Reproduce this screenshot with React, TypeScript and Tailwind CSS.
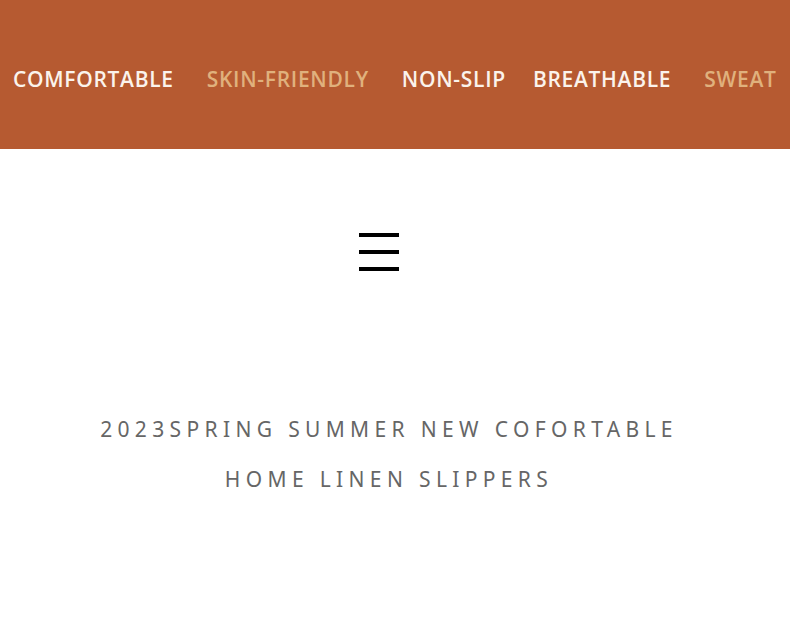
import React from 'react'

const tags = [
  { label: 'COMFORTABLE', tone: 'light', gap: 'ml-0' },
  { label: 'SKIN-FRIENDLY', tone: 'tan', gap: 'ml-[33px]' },
  { label: 'NON-SLIP', tone: 'light', gap: 'ml-[33px]' },
  { label: 'BREATHABLE', tone: 'light', gap: 'ml-[27px]' },
  { label: 'SWEAT', tone: 'tan', gap: 'ml-[33px]' },
]

export default function App() {
  return (
    <div className="w-[790px] h-[623px] bg-white overflow-hidden" style={{ fontFamily: '"Open Sans", "Noto Sans", sans-serif' }}>
      {/* Feature banner */}
      <div className="h-[149px] bg-[#b65a31] flex items-center pl-[13px] pt-[9px] whitespace-nowrap overflow-hidden">
        {tags.map(t => (
          <span
            key={t.label}
            className={
              t.gap + ' text-[21px] font-semibold tracking-[0.7px] leading-none ' +
              (t.tone === 'light' ? 'text-[#fbf3ec]' : 'text-[#e0b17d]')
            }
          >
            {t.label}
          </span>
        ))}
      </div>

      {/* Menu icon */}
      <div className="flex justify-center pt-[84px]">
        <svg width="40" height="38" viewBox="0 0 40 38" className="mr-[32px]">
          <rect x="0" y="0" width="40" height="4" fill="#000" />
          <rect x="0" y="17" width="40" height="4" fill="#000" />
          <rect x="0" y="34" width="40" height="4" fill="#000" />
        </svg>
      </div>

      {/* Title */}
      <div className="mt-[133px] pr-[12px] flex flex-col items-center text-[#666666] text-[21px] tracking-[5.35px] leading-[50px] font-normal" style={{ fontFamily: '"Noto Sans", "Open Sans", sans-serif' }}>
        <p>2023SPRING SUMMER NEW COFORTABLE</p>
        <p>HOME LINEN SLIPPERS</p>
      </div>
    </div>
  )
}
